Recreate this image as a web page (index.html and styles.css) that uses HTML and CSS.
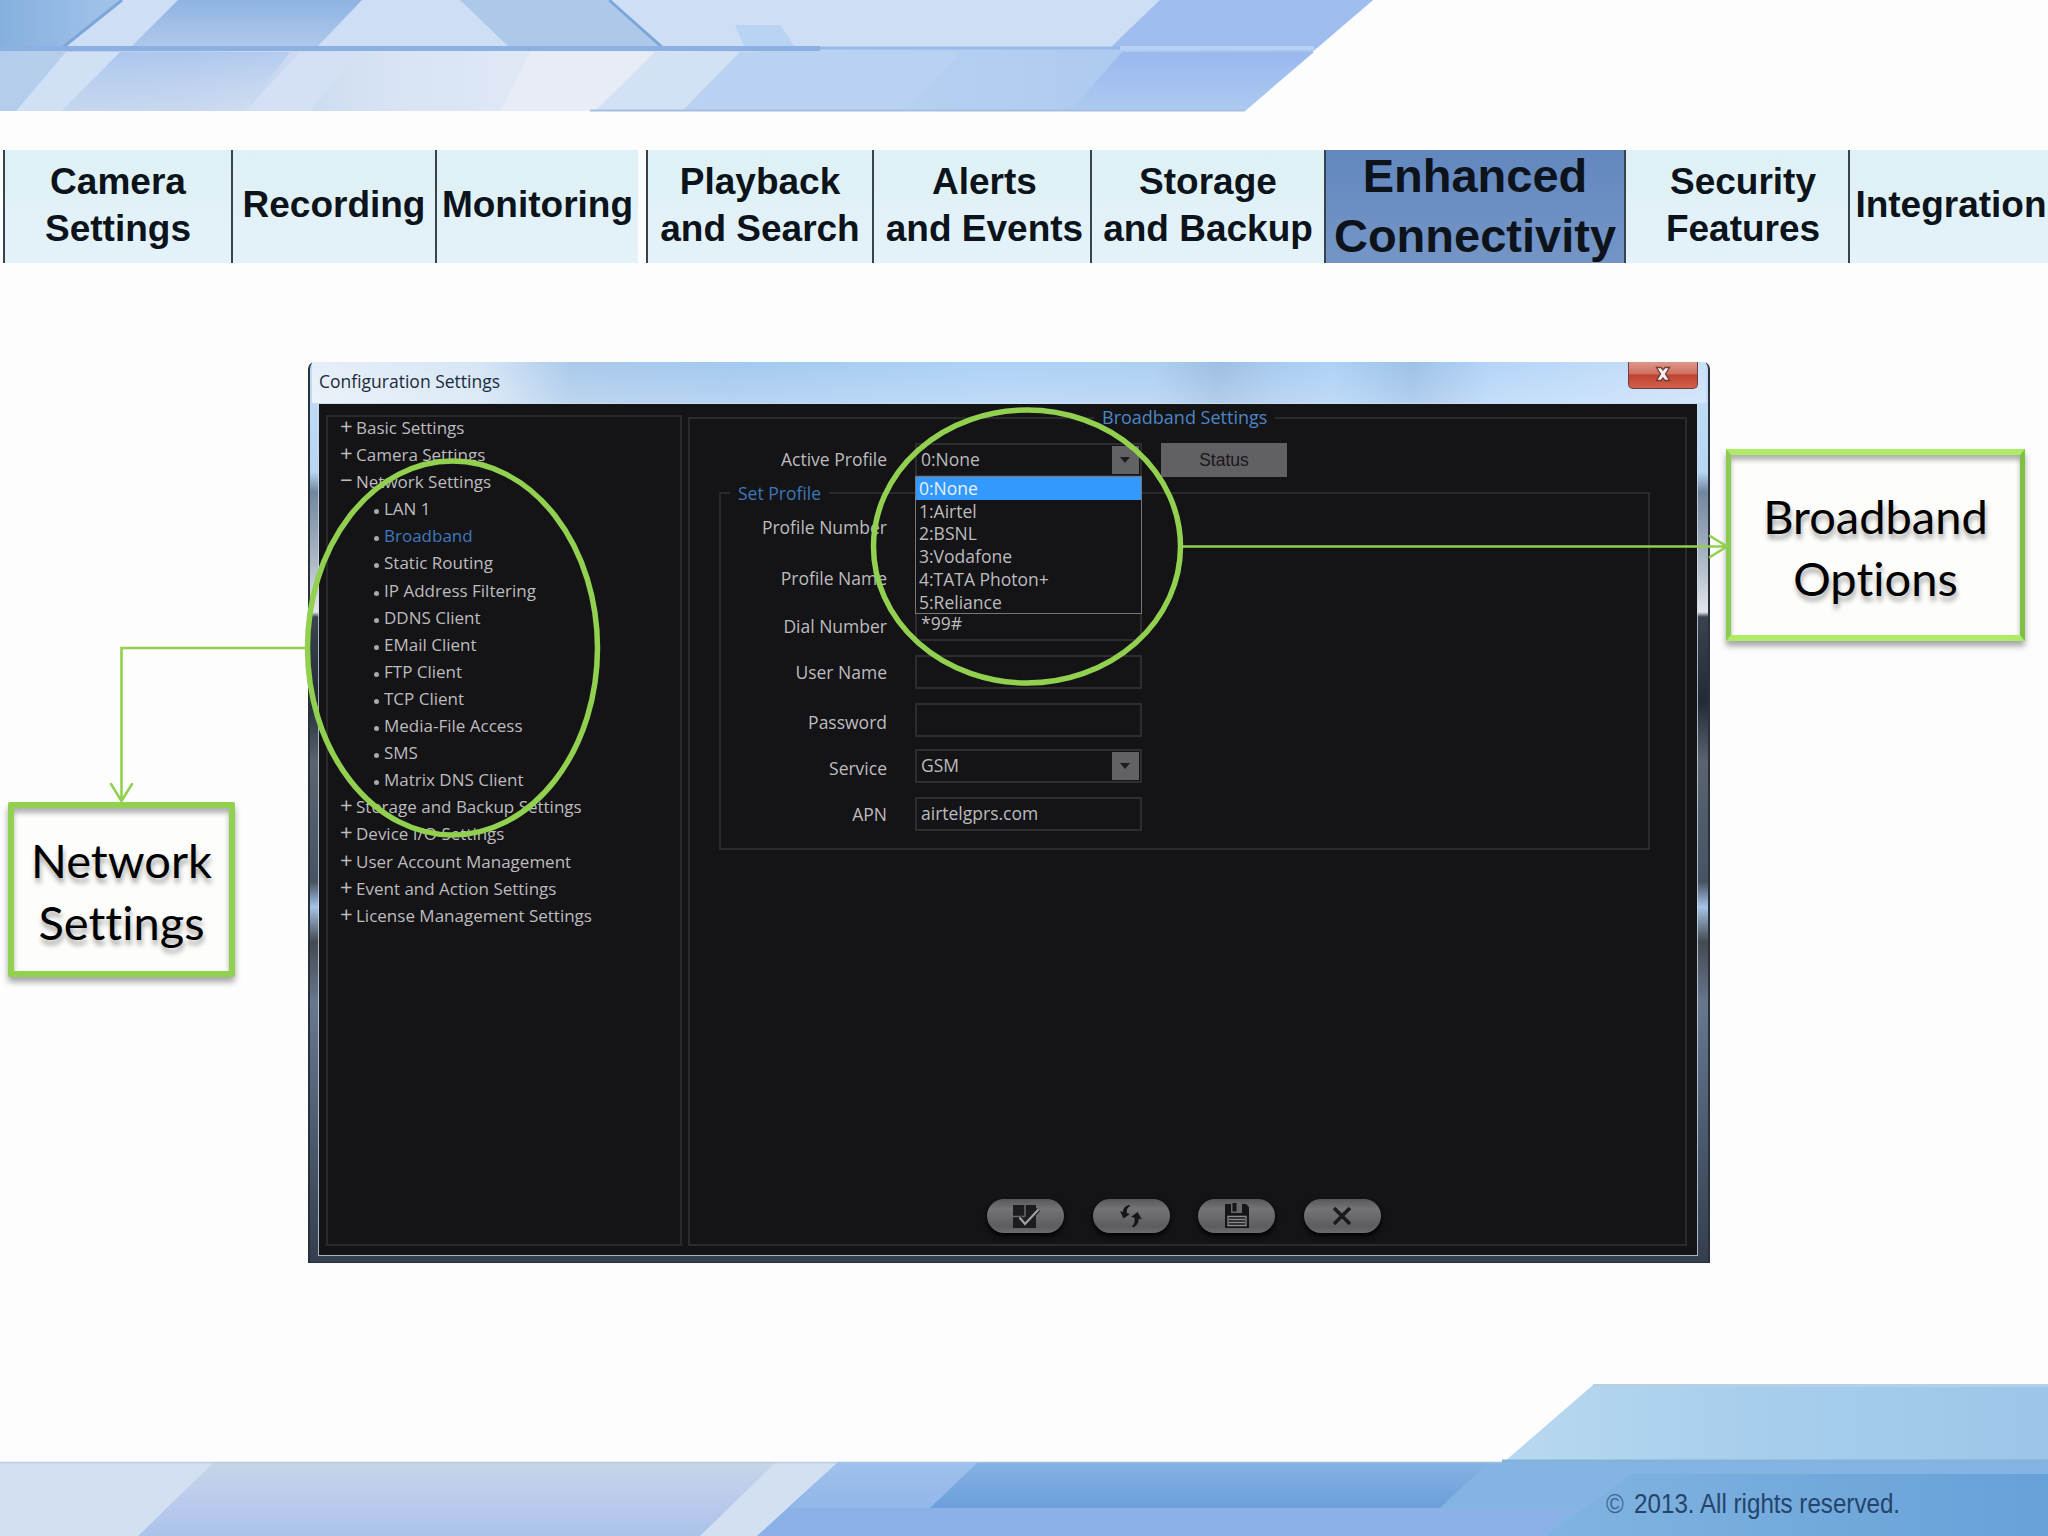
FILE: index.html
```html
<!DOCTYPE html>
<html lang="en">
<head>
  <meta charset="utf-8">
  <title>Enhanced Connectivity</title>
  <link rel="stylesheet" href="styles.css">
</head>
<body>
<div class="slide">
  <header class="banner">
    <svg width="1400" height="116" viewBox="0 0 1400 116">
      <defs>
        <linearGradient id="top1" x1="0" x2="1" y1="0" y2="0">
          <stop offset="0" stop-color="#85b0de"/><stop offset="1" stop-color="#a3c4ea"/>
        </linearGradient>
        <linearGradient id="top2" x1="0" x2="0" y1="0" y2="1">
          <stop offset="0" stop-color="#8fb3e3"/><stop offset="1" stop-color="#b0c9ec"/>
        </linearGradient>
        <linearGradient id="low" x1="0" x2="1" y1="0" y2="0">
          <stop offset="0" stop-color="#b3cdec"/><stop offset=".14" stop-color="#bdd0ec"/>
          <stop offset=".3" stop-color="#d8e4f4"/><stop offset=".48" stop-color="#e4ebf6"/>
          <stop offset=".58" stop-color="#bcd4f2"/><stop offset="1" stop-color="#a5c5ee"/>
        </linearGradient>
        <linearGradient id="fade" x1="0" x2="0" y1="0" y2="1">
          <stop offset="0" stop-color="#9dbdf0" stop-opacity=".5"/><stop offset="1" stop-color="#dbe6f2" stop-opacity=".35"/>
        </linearGradient>
        <linearGradient id="end" x1="0" x2="0" y1="0" y2="1">
          <stop offset="0" stop-color="#9ab8ee"/><stop offset="1" stop-color="#accaf0"/>
        </linearGradient>
      </defs>
      <polygon points="0,0 1373,0 1317,48 0,48" fill="#cddef5"/>
      <polygon points="0,0 122,0 62,48 0,48" fill="url(#top1)"/>
      <polygon points="178,0 362,0 316,48 130,48" fill="url(#top2)"/>
      <polygon points="460,0 607,0 662,48 510,48" fill="#adc9ea"/>
      <polygon points="735,25 780,25 796,48 745,48" fill="#b9d4f2"/>
      <polygon points="1160,0 1373,0 1317,48 1110,48" fill="#9fbdef"/>
      <path d="M122 0 62 48M609 0 663 48" stroke="#7da5d8" stroke-width="3" fill="none"/>
      <polygon points="0,48 1317,48 1245,111 0,111" fill="url(#low)"/>
      <polygon points="120,52 290,52 245,111 62,111" fill="url(#fade)"/>
      <polygon points="66,52 120,52 62,111 16,111" fill="#d0e0f5"/>
      <polygon points="300,52 360,52 310,111 245,111" fill="#d3e0f5"/>
      <polygon points="530,52 655,52 595,111 500,111" fill="#e7ecf6"/>
      <polygon points="655,52 740,52 682,111 595,111" fill="#d3e1f5"/>
      <polygon points="740,52 960,52 905,111 682,111" fill="#b9d2f1"/>
      <polygon points="1122,52 1314,52 1245,111 1070,111" fill="url(#end)"/>
      <path d="M0 48.500H820" stroke="#8cb0e2" stroke-width="5"/>
      <path d="M820 48H1120" stroke="#97b9e8" stroke-width="3"/>
      <path d="M1120 48H1314" stroke="#b7d2f5" stroke-width="4"/>
      <path d="M590 110.500H1245" stroke="#a4bfdf" stroke-width="2"/>
    </svg>
  </header>

  <nav class="tabs">
    <a class="tab tab-camera">Camera<br>Settings</a>
    <a class="tab tab-recording">Recording</a>
    <a class="tab tab-monitoring">Monitoring</a>
    <a class="tab tab-playback">Playback<br>and Search</a>
    <a class="tab tab-alerts">Alerts<br>and Events</a>
    <a class="tab tab-storage">Storage<br>and Backup</a>
    <a class="tab tab-active">Enhanced<br>Connectivity</a>
    <a class="tab tab-security">Security<br>Features</a>
    <a class="tab tab-integration">Integration</a>
  </nav>

  <main class="stage">
    <div class="callout callout-network">Network<br>Settings</div>

    <section class="window">
      <div class="titlebar">
        <span class="title">Configuration Settings</span>
        <button class="close" aria-label="Close">
          <svg width="18" height="16" viewBox="0 0 18 16">
            <path d="M2.500 1.500h4.500L9 4l2-2.500h4.500L11.500 8l4 6.500H11L9 12l-2 2.500H2.500l4-6.500z" fill="#f6f1ee" stroke="#6b3f3d" stroke-width="1.300"/>
          </svg>
        </button>
      </div>
      <div class="client">
        <ul class="tree">
          <li><i>+</i>Basic Settings</li>
          <li><i>+</i>Camera Settings</li>
          <li><i>−</i>Network Settings</li>
          <li class="sub">LAN 1</li>
          <li class="sub current">Broadband</li>
          <li class="sub">Static Routing</li>
          <li class="sub">IP Address Filtering</li>
          <li class="sub">DDNS Client</li>
          <li class="sub">EMail Client</li>
          <li class="sub">FTP Client</li>
          <li class="sub">TCP Client</li>
          <li class="sub">Media-File Access</li>
          <li class="sub">SMS</li>
          <li class="sub">Matrix DNS Client</li>
          <li><i>+</i>Storage and Backup Settings</li>
          <li><i>+</i>Device I/O Settings</li>
          <li><i>+</i>User Account Management</li>
          <li><i>+</i>Event and Action Settings</li>
          <li><i>+</i>License Management Settings</li>
        </ul>

        <div class="panel">
          <div class="panel-title"><span>Broadband Settings</span></div>
          <div class="row row-active">
            <label>Active Profile</label>
            <div class="field select">0:None<b class="arrow"></b>
              <ul class="options">
                <li class="selected">0:None</li>
                <li>1:Airtel</li>
                <li>2:BSNL</li>
                <li>3:Vodafone</li>
                <li>4:TATA Photon+</li>
                <li>5:Reliance</li>
              </ul>
            </div>
            <button class="status">Status</button>
          </div>

          <div class="group">
            <div class="group-title"><span>Set Profile</span></div>
            <div class="row"><label class="high">Profile Number</label><div class="field"></div></div>
            <div class="row"><label class="low">Profile Name</label><div class="field"></div></div>
            <div class="row"><label class="low">Dial Number</label><div class="field">*99#</div></div>
            <div class="row"><label>User Name</label><div class="field"></div></div>
            <div class="row"><label class="low">Password</label><div class="field"></div></div>
            <div class="row row-service"><label class="low">Service</label><div class="field select">GSM<b class="arrow"></b></div></div>
            <div class="row"><label>APN</label><div class="field">airtelgprs.com</div></div>
          </div>

          <div class="actions">
            <button class="pill" aria-label="Apply">
              <svg width="30" height="26" viewBox="0 0 30 26">
                <rect x="2" y="2" width="23" height="23" fill="#1c1b1d"/>
                <path d="M14 2v12M2 13.500h11" stroke="#6a696b" stroke-width="1.500"/>
                <path d="M8.500 14.500 14 21 27.500 6.500" stroke="#222" stroke-width="4.500" fill="none"/>
                <path d="M8.500 14.500 14 21 27.500 6.500" stroke="#a5a4a6" stroke-width="2" fill="none"/>
              </svg>
            </button>
            <button class="pill" aria-label="Refresh">
              <svg width="26" height="26" viewBox="0 0 26 26" fill="#161517">
                <path d="M11 2C7 3 5 5.500 4.800 9L2 8l3.500 7.500L12 11 9 10.300C8.500 7 9 4.500 12.500 3z"/>
                <path d="M15.500 24.500c4-2.500 5.500-5.500 5.200-9l3.300 1L19.500 9 13 14l3.500.8c.5 3.200 0 6-2.500 8.700z"/>
              </svg>
            </button>
            <button class="pill" aria-label="Save">
              <svg width="26" height="26" viewBox="0 0 26 26">
                <path d="M1 1h21l3 3v21H1z" fill="#161517"/>
                <path d="M7 0h11v10H7z" fill="#68676a"/>
                <path d="M8.500 0h4v8.500h-4z" fill="#161517"/>
                <path d="M4 13.500h18v9H4z" fill="#161517" stroke="#8b8a8c" stroke-width="1.300"/>
                <path d="M5 16.500h16M5 19.500h16" stroke="#8b8a8c" stroke-width="1.300"/>
              </svg>
            </button>
            <button class="pill" aria-label="Cancel">
              <svg width="22" height="22" viewBox="0 0 22 22">
                <path d="M3 3 19 19M19 3 3 19" stroke="#1a191b" stroke-width="3.600"/>
              </svg>
            </button>
          </div>
        </div>
      </div>
    </section>

    <div class="callout callout-broadband">Broadband<br>Options</div>

    <!-- highlight rings and arrows -->
    <svg class="marks" width="2048" height="1120" viewBox="0 263 2048 1120" fill="none" stroke="#92d050">
      <ellipse cx="452.500" cy="648" rx="145" ry="187" stroke-width="5.500"/>
      <ellipse cx="1027" cy="546.500" rx="153.500" ry="136.500" stroke-width="5.500"/>
      <path d="M305 648H121.500V800M111 784l10.500 17L132 784" stroke-width="2.600" stroke-linecap="round"/>
      <path d="M1183 546.500H1726M1710 536l17 10.500L1710 557" stroke-width="2.600" stroke-linecap="round"/>
    </svg>
  </main>

  <footer class="footer">
    <svg width="2048" height="152" viewBox="0 0 2048 152">
      <defs>
        <linearGradient id="f1" x1="0" x2="0" y1="0" y2="1">
          <stop offset="0" stop-color="#c6d6e6"/><stop offset=".5" stop-color="#bccbed"/><stop offset="1" stop-color="#a9c3e9"/>
        </linearGradient>
        <linearGradient id="f2" x1="0" x2="0" y1="0" y2="1">
          <stop offset="0" stop-color="#9dc0e6"/><stop offset=".5" stop-color="#8bb1e6"/><stop offset="1" stop-color="#8bb0ea"/>
        </linearGradient>
        <linearGradient id="f3" x1="0" x2="0" y1="0" y2="1">
          <stop offset="0" stop-color="#84b3e2"/><stop offset="1" stop-color="#6c9edb"/>
        </linearGradient>
        <linearGradient id="f4" x1="0" x2="1" y1="0" y2="0">
          <stop offset="0" stop-color="#b8d8ef"/><stop offset=".5" stop-color="#a6cdec"/><stop offset="1" stop-color="#9bc6e9"/>
        </linearGradient>
        <linearGradient id="f5" x1="0" x2="1" y1="0" y2="0">
          <stop offset="0" stop-color="#80b3e0"/><stop offset="1" stop-color="#5f9cd6"/>
        </linearGradient>
      </defs>
      <polygon points="0,78 2048,78 2048,152 0,152" fill="#d3e0f2"/>
      <polygon points="214,78 776,78 700,152 138,152" fill="url(#f1)"/>
      <polygon points="838,78 2048,78 2048,152 757,152" fill="url(#f2)"/>
      <polygon points="838,78 978,78 930,124 790,124" fill="#a4c2ef" opacity=".4"/>
      <polygon points="978,78 1490,78 1440,124 930,124" fill="url(#f3)"/>
      <polygon points="1593,1 2048,1 2048,78 1504,78" fill="url(#f4)"/>
      <polygon points="1490,78 2048,78 2048,152 1545,152 1575,124 1440,124" fill="#84b5e2"/>
      <polygon points="1632,90 2048,90 2048,152 1545,152" fill="url(#f5)" opacity=".8"/>
      <path d="M1593 1.500H2048" stroke="#b4cfe6" stroke-width="3"/>
      <path d="M1502 77H2048" stroke="#82b3dc" stroke-width="3"/>
      <path d="M0 78.500H1502" stroke="#a9c3dc" stroke-opacity=".5" stroke-width="2"/>
    </svg>
    <p class="copyright"><span class="sign">©</span> 2013. All rights reserved.</p>
  </footer>
</div>
</body>
</html>
```
FILE: styles.css
```css
* {
  box-sizing: border-box;
}
body {
  margin: 0;
  background: #fdfdfe;
}
button {
  border: none;
  padding: 0;
  font: inherit;
}
ul {
  list-style: none;
  margin: 0;
  padding: 0;
}
svg {
  display: block;
}
.slide {
  width: 2048px;
  height: 1536px;
  overflow: hidden;
  display: grid;
  grid-template-rows: 150px 113px 1121px 152px;
}

/* tabs */
.tabs {
  display: grid;
  grid-template-columns: 228px 204px 211px 226px 218px 234px 302px 222px 1fr;
  grid-template-rows: 113px;
  padding-left: 3px;
  font: bold 37px/47.5px "Liberation Sans", Arial, sans-serif;
  color: #0d131b;
}
.tab {
  display: flex;
  align-items: center;
  justify-content: center;
  text-align: center;
  white-space: nowrap;
  padding-bottom: 3px;
  border-left: 2px solid #38434b;
  background: linear-gradient(#def1f4, #e4f2fa);
}
.tab-monitoring {
  border-right: 8px solid #fdfdfe;
}
.tab-alerts {
  padding-left: 5px;
}
.tab-active {
  font-size: 47px;
  line-height: 60px;
  padding-bottom: 2px;
  border-right: 2px solid #38434b;
  background: linear-gradient(#6288bf, #7595c6);
}
.tab-security {
  padding-left: 12px;
  border-left: none;
}
.tab-integration {
  padding-left: 4px;
}

/* stage */
.stage {
  position: relative;
  display: flex;
  align-items: flex-start;
}
.marks {
  position: absolute;
  left: 0;
  top: 0;
}
.callout {
  display: flex;
  align-items: center;
  justify-content: center;
  text-align: center;
  font: 47px/62px Lato, Carlito, sans-serif;
  font-variant-ligatures: none;
  color: #000;
  background: #fdfefc;
  text-shadow: 1px 5px 5px rgba(0, 0, 0, 0.35);
}
.callout-network {
  width: 227px;
  height: 175px;
  margin: 539px 73px 0 8px;
  padding-top: 3px;
  border: 6px solid #92d050;
  border-radius: 2px;
  box-shadow: 0 5px 6px rgba(0, 0, 0, 0.35), inset 0 5px 5px rgba(0, 0, 0, 0.3);
}
.callout-broadband {
  width: 299px;
  height: 192px;
  margin: 186px 0 0 16px;
  padding-top: 3px;
  border: 6px solid;
  border-width: 6px 5px;
  border-color: #aeec66 #7ec043 #aeec66 #8acb50;
  box-shadow: 0 5px 6px rgba(0, 0, 0, 0.35), inset 0 5px 5px rgba(0, 0, 0, 0.3);
}

/* window */
.window {
  width: 1402px;
  height: 901px;
  margin-top: 99px;
  padding: 0 10px 6px 8px;
  border: solid #28323d;
  border-width: 0 2px 1px;
  border-radius: 7px 7px 0 0;
  background: linear-gradient(#c4dcf5 0, #b7d5f3 110px, #71869e 130px, #b7c1cd 210px, #e3e6ea 250px, #39434e 255px, #222b35 340px, #5a6470 400px, #475363 520px, #a5c4e8 545px, #454950 580px, #67778e 640px, #4e5d72 760px, #343e4d 100%);
  font: 17px/27px "Open Sans", "Noto Sans", sans-serif;
  color: #bdbcbe;
}
.titlebar {
  display: flex;
  justify-content: space-between;
  height: 41px;
  margin: 0 -8px 0 -6px;
  padding-right: 8px;
  background: linear-gradient(rgba(255, 255, 255, 0.05), rgba(255, 255, 255, 0.25)),
    linear-gradient(90deg, #e4eef8 0, #d3e4f5 170px, #a5c7ea 260px, #9fc6ee 420px, #a9cff5 680px, #a8cdf1 840px, #98bce1 905px, #a3c8ee 960px, #a9cff5 1020px, #98bee6 1100px, #b0d3f8 1180px, #c7def8 100%);
}
.title {
  padding: 6px 0 0 7px;
  font-size: 17.5px;
  color: #1c2a3c;
}
.close {
  display: flex;
  align-items: center;
  justify-content: center;
  width: 70px;
  height: 27px;
  padding-bottom: 3px;
  border: 1px solid #6d3c42;
  border-top: none;
  border-radius: 0 0 5px 5px;
  background: linear-gradient(#dd9788, #d07060 45%, #bf4230 50%, #d2604a);
}
.client {
  display: flex;
  gap: 6px;
  height: 853px;
  padding: 11px 10px 9px 7px;
  border: 1px solid rgba(205, 222, 238, 0.75);
  background: #141316;
  background-clip: padding-box;
}
.tree {
  width: 356px;
  padding: 0 0 0 13px;
  border: 2px solid #2a2a2c;
  line-height: 27.1px;
}
.tree li {
  height: 27.1px;
  margin: 0;
  white-space: nowrap;
}
.tree li:first-child {
  margin-top: -3px;
}
.tree i {
  display: inline-block;
  width: 15px;
  font-style: normal;
  font-size: 22px;
  line-height: 20px;
  margin-left: -1px;
  margin-right: 1px;
}
.tree .sub {
  padding-left: 42px;
}
.tree .sub::before {
  content: "";
  display: inline-block;
  width: 5px;
  height: 5px;
  margin: 0 5px 1px -9px;
  border-radius: 3px;
  background: #a9a8aa;
}
.tree .current {
  color: #3f79bd;
}

.panel {
  flex: 1;
  display: flex;
  flex-direction: column;
  margin-top: 2px;
  border: 2px solid #2a2a2c;
  font-size: 17.5px;
}
.panel-title {
  height: 24px;
  margin-top: -14px;
  padding-left: 404px;
  line-height: 25px;
  font-size: 18px;
  color: #4d86c6;
}
.panel-title span,
.group-title span {
  padding: 0 8px;
  background: #141316;
}
.row {
  display: flex;
  height: 34px;
  margin-bottom: 14px;
}
.row label {
  width: 167px;
  margin-right: 28px;
  padding-top: 4px;
  text-align: right;
  white-space: nowrap;
}
.row .high {
  padding-top: 3px;
}
.row .low {
  padding-top: 6px;
}
.row-active {
  margin: 14px 0 15px 30px;
}
.row-active label {
  padding-top: 3px;
}
.row-service {
  margin-top: -2px;
  margin-bottom: 14px;
}
.field {
  position: relative;
  width: 227px;
  padding-left: 4px;
  border: 2px solid #2d2d30;
  line-height: 29px;
}
.arrow {
  position: absolute;
  right: 1px;
  top: 1px;
  width: 27px;
  height: 28px;
  background: #626164;
}
.arrow::after {
  content: "";
  position: absolute;
  left: 8px;
  top: 11px;
  border: 5px solid transparent;
  border-top: 6px solid #1d1c1e;
}
.options {
  position: absolute;
  z-index: 1;
  left: -2px;
  top: 31px;
  width: 227px;
  border: 1px solid #77777a;
  background: #141316;
  line-height: 22.7px;
}
.options li {
  padding-left: 3px;
}
.options .selected {
  color: #e6f0fa;
  background: #3399ff;
}
.status {
  width: 126px;
  margin-left: 19px;
  background: #616063;
  color: #19181a;
  font: 17.5px "Liberation Sans", Arial, sans-serif;
}

.group {
  width: 931px;
  height: 358px;
  margin-left: 29px;
  border: 2px solid #2a2a2c;
}
.group .row {
  margin-left: -1px;
}
.group-title {
  height: 24px;
  margin: -12px 0 5px;
  padding-left: 9px;
  line-height: 23px;
  font-size: 17.5px;
  color: #3d78b8;
}
.actions {
  display: flex;
  gap: 28.5px;
  margin: auto 0 11px 297px;
}
.pill {
  display: flex;
  align-items: center;
  justify-content: center;
  width: 77px;
  height: 34px;
  border-radius: 17px;
  background: linear-gradient(#59585b, #747376 30%, #5d5c5f 80%, #6b6a6d);
  box-shadow: 0 3px 5px #000;
}

/* footer */
.footer {
  display: grid;
}
.footer > * {
  grid-area: 1 / 1;
}
.copyright {
  justify-self: start;
  align-self: end;
  margin: 0 0 15px 1606px;
  font: 27px/34px "Liberation Sans", Arial, sans-serif;
  color: #25446b;
  white-space: nowrap;
  transform: scaleX(0.895);
  transform-origin: left;
}
.sign {
  margin-right: 4px;
  color: #3f6590;
}
```
